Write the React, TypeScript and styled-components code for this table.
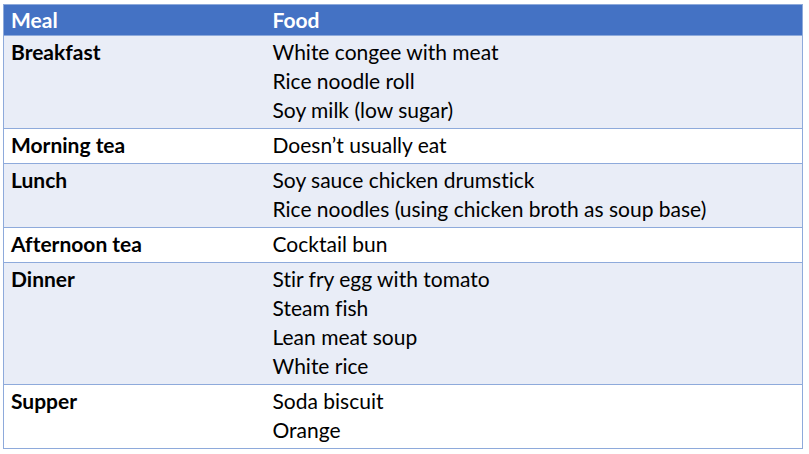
import styled, { createGlobalStyle } from 'styled-components'

interface MealRow {
  meal: string
  foods: string[]
}

const rows: MealRow[] = [
  { meal: 'Breakfast', foods: ['White congee with meat', 'Rice noodle roll', 'Soy milk (low sugar)'] },
  { meal: 'Morning tea', foods: ['Doesn’t usually eat'] },
  { meal: 'Lunch', foods: ['Soy sauce chicken drumstick', 'Rice noodles (using chicken broth as soup base)'] },
  { meal: 'Afternoon tea', foods: ['Cocktail bun'] },
  { meal: 'Dinner', foods: ['Stir fry egg with tomato', 'Steam fish', 'Lean meat soup', 'White rice'] },
  { meal: 'Supper', foods: ['Soda biscuit', 'Orange'] },
]

const App: React.FC = () => {
  return (
    <>
      <GlobalStyle />
      <Page>
        <Table>
          <colgroup>
            <col style={{ width: 262 }} />
            <col />
          </colgroup>
          <thead>
            <tr>
              <HeadCell>Meal</HeadCell>
              <HeadCell>Food</HeadCell>
            </tr>
          </thead>
          <tbody>
            {rows.map((row, i) => (
              <Row key={row.meal} $banded={i % 2 === 0}>
                <MealCell>{row.meal}</MealCell>
                <FoodCell>
                  {row.foods.map(f => (
                    <FoodLine key={f}>{f}</FoodLine>
                  ))}
                </FoodCell>
              </Row>
            ))}
          </tbody>
        </Table>
      </Page>
    </>
  )
}

export default App

const GlobalStyle = createGlobalStyle`
  body {
    margin: 0;
    background: #ffffff;
    font-family: Lato, "Liberation Sans", sans-serif;
  }
`
const Page = styled.div`
  padding: 4px 7px 0 3px;
`
const Table = styled.table`
  width: 800px;
  border-collapse: collapse;
  table-layout: fixed;
  border: 1px solid #8eaadb;
  font-size: 21px;
  color: #000000;
  font-variant-ligatures: none;
`
const HeadCell = styled.th`
  background-color: #4472c4;
  color: #ffffff;
  font-weight: bold;
  text-align: left;
  line-height: 29px;
  padding: 0 7px 1px 7px;
`
const Row = styled.tr<{ $banded: boolean }>`
  background-color: ${p => (p.$banded ? '#e9edf7' : '#ffffff')};
  border-top: 1px solid #8eaadb;
`
const MealCell = styled.td`
  font-weight: bold;
  vertical-align: top;
  line-height: 29px;
  padding: 1px 7px 4px 7px;
`
const FoodCell = styled.td`
  vertical-align: top;
  line-height: 29px;
  padding: 1px 7px 4px 7px;
`
const FoodLine = styled.div``
